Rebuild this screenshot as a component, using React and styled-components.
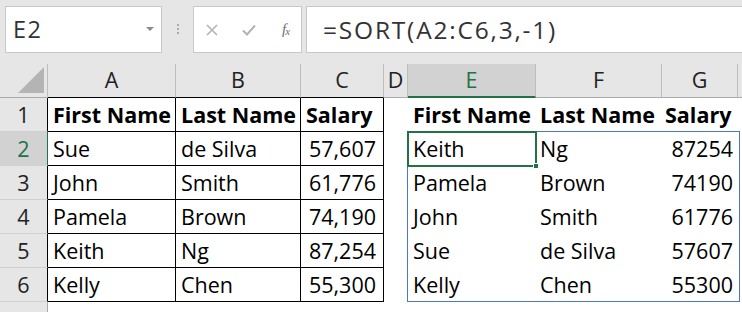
import React from "react";
import styled, { createGlobalStyle } from "styled-components";

const GlobalStyle = createGlobalStyle`
  html, body { margin: 0; padding: 0; background: #ffffff; }
  body { font-family: "Open Sans", "Noto Sans", sans-serif; overflow: hidden; }
  * { box-sizing: border-box; }
`;

const Page = styled.div`
  width: 742px;
  height: 312px;
  overflow: hidden;
  background: #ffffff;
`;

const Toolbar = styled.div`
  height: 64px;
  background: #e6e6e6;
  display: flex;
  align-items: flex-start;
  padding: 6px 0 0 5px;
`;

const NameBox = styled.div`
  width: 157px;
  height: 47px;
  background: #fff;
  border: 1px solid #c8c8c8;
  display: flex;
  align-items: center;
  justify-content: space-between;
  padding: 0 7px 0 7px;
  font-size: 23.5px;
  letter-spacing: 1.5px;
  color: #333;
`;

const NameText = styled.span`
  line-height: 1;
  margin-top: 1px;
`;

const DropArrow = styled.span`
  width: 0;
  height: 0;
  border-left: 4px solid transparent;
  border-right: 4px solid transparent;
  border-top: 4px solid #8a8a8a;
  margin-bottom: 2px;
`;

const Grip = styled.div`
  width: 31px;
  height: 47px;
  display: flex;
  flex-direction: column;
  align-items: center;
  justify-content: center;
  gap: 2px;
  padding-bottom: 1px;
`;

const Dot = styled.span`
  width: 2px;
  height: 2px;
  background: #ababab;
`;

const FxBox = styled.div`
  width: 109px;
  height: 47px;
  background: #fff;
  border: 1px solid #c8c8c8;
  display: flex;
  align-items: center;
  padding: 0 0 0 12px;
  gap: 24px;
`;

const FxText = styled.span`
  font-family: "Liberation Serif", "DejaVu Serif", serif;
  font-style: italic;
  font-size: 15px;
  color: #6e6e6e;
  margin-left: 2px;
  margin-top: -1px;
  letter-spacing: -1px;
  & > span {
    font-size: 11px;
    vertical-align: -1px;
  }
`;

const FormulaBox = styled.div`
  flex: 1;
  height: 47px;
  margin-left: 4px;
  background: #fff;
  border: 1px solid #c8c8c8;
  border-right: none;
  display: flex;
  align-items: center;
  padding-left: 16px;
  font-size: 24.5px;
  letter-spacing: 1.8px;
  color: #333;
  white-space: nowrap;
`;

const Sheet = styled.div`
  display: grid;
  grid-template-columns: 48px 128px 125px 83px 24px 128px 126px 76px 1fr;
  grid-template-rows: repeat(8, 34px);
  font-size: 21.5px;
`;

const Corner = styled.div`
  background: #e6e6e6;
  border-right: 1px solid #bdbdbd;
  border-bottom: 1px solid #ababab;
  display: flex;
  align-items: flex-end;
  justify-content: flex-end;
  padding: 0 3px 4px 0;
`;

const ColHeader = styled.div`
  background: ${(p) => (p.$active ? "#d2d2d2" : "#e6e6e6")};
  color: ${(p) => (p.$active ? "#217346" : "#222")};
  border-right: 1px solid #bdbdbd;
  border-bottom: ${(p) =>
    p.$active ? "2px solid #217346" : `1px solid ${p.$dark ? "#000" : "#ababab"}`};
  text-align: center;
  line-height: 32px;
  overflow: hidden;
`;

const RowHeader = styled.div`
  background: ${(p) => (p.$active ? "#d2d2d2" : "#e6e6e6")};
  color: ${(p) => (p.$active ? "#217346" : "#222")};
  border-right: 1px solid ${(p) => (p.$active ? "#217346" : p.$dark ? "#000" : "#ababab")};
  border-bottom: 1px solid #d0d0d0;
  text-align: center;
  line-height: 32px;
  padding-top: 1px;
`;

const Cell = styled.div`
  position: relative;
  background: #fff;
  color: #000;
  font-weight: ${(p) => (p.$bold ? 700 : 400)};
  text-align: ${(p) => (p.$num ? "right" : "left")};
  padding: 1px ${(p) => p.$pr ?? 5}px 0 ${(p) => p.$pl ?? 5}px;
  line-height: 32px;
  white-space: nowrap;
  border-right: 1px solid ${(p) => (p.$boxed ? "#000" : "transparent")};
  border-bottom: 1px solid ${(p) => (p.$boxed ? "#000" : "transparent")};
`;

/* Overlays drawn over the sheet, anchored to the active cell E2 */
const SpillBox = styled.div`
  position: absolute;
  z-index: 2;
  left: -1px;
  top: -1px;
  width: 333px;
  height: 171px;
  border: 1px solid #4a78c2;
  pointer-events: none;
`;

const Selection = styled.div`
  position: absolute;
  z-index: 3;
  left: -1px;
  top: -1px;
  width: 130px;
  height: 36px;
  border: 2px solid #217346;
  pointer-events: none;
`;

const Handle = styled.span`
  position: absolute;
  right: -4px;
  bottom: -4px;
  width: 6px;
  height: 6px;
  background: #217346;
  border: 1px solid #fff;
`;

const cols = ["A", "B", "C", "D", "E", "F", "G", ""];

const source = [
  ["Sue", "de Silva", "57,607"],
  ["John", "Smith", "61,776"],
  ["Pamela", "Brown", "74,190"],
  ["Keith", "Ng", "87,254"],
  ["Kelly", "Chen", "55,300"],
];

const sorted = [
  ["Keith", "Ng", "87254"],
  ["Pamela", "Brown", "74190"],
  ["John", "Smith", "61776"],
  ["Sue", "de Silva", "57607"],
  ["Kelly", "Chen", "55300"],
];

const CrossIcon = () => (
  <svg width="12" height="12" viewBox="0 0 12 12">
    <path d="M1 1 L11 11 M11 1 L1 11" stroke="#b3b3b3" strokeWidth="1.6" fill="none" />
  </svg>
);

const CheckIcon = () => (
  <svg width="14" height="12" viewBox="0 0 14 12">
    <path d="M1 6.5 L5 10.5 L13 1.5" stroke="#b3b3b3" strokeWidth="2" fill="none" />
  </svg>
);

const CornerTriangle = () => (
  <svg width="26" height="26" viewBox="0 0 26 26">
    <polygon points="26,0 26,26 0,26" fill="#b4b4b4" />
  </svg>
);

export default function App() {
  return (
    <Page>
      <GlobalStyle />
      <Toolbar>
        <NameBox>
          <NameText>E2</NameText>
          <DropArrow />
        </NameBox>
        <Grip>
          <Dot />
          <Dot />
          <Dot />
        </Grip>
        <FxBox>
          <CrossIcon />
          <CheckIcon />
          <FxText>
            f<span>x</span>
          </FxText>
        </FxBox>
        <FormulaBox>=SORT(A2:C6,3,-1)</FormulaBox>
      </Toolbar>
      <Sheet>
        <Corner>
          <CornerTriangle />
        </Corner>
        {cols.map((c, i) => (
          <ColHeader key={"h" + i} $active={c === "E"} $dark={i < 3}>
            {c}
          </ColHeader>
        ))}

        <RowHeader $dark>1</RowHeader>
        <Cell $boxed $bold>First Name</Cell>
        <Cell $boxed $bold>Last Name</Cell>
        <Cell $boxed $bold>Salary</Cell>
        <Cell />
        <Cell $bold>First Name</Cell>
        <Cell $bold $pl={4}>Last Name</Cell>
        <Cell $bold $pl={3}>Salary</Cell>
        <Cell />

        {source.map((r, i) => (
          <React.Fragment key={"r" + i}>
            <RowHeader $active={i === 0} $dark>
              {i + 2}
            </RowHeader>
            <Cell $boxed>{r[0]}</Cell>
            <Cell $boxed>{r[1]}</Cell>
            <Cell $boxed $num $pr={7}>
              {r[2]}
            </Cell>
            <Cell />
            <Cell>
              {sorted[i][0]}
              {i === 0 && (
                <>
                  <SpillBox />
                  <Selection>
                    <Handle />
                  </Selection>
                </>
              )}
            </Cell>
            <Cell $pl={4}>{sorted[i][1]}</Cell>
            <Cell $num $pr={4}>
              {sorted[i][2]}
            </Cell>
            <Cell />
          </React.Fragment>
        ))}

        <RowHeader />
        {cols.map((c, i) => (
          <Cell key={"e" + i} />
        ))}
      </Sheet>
    </Page>
  );
}
